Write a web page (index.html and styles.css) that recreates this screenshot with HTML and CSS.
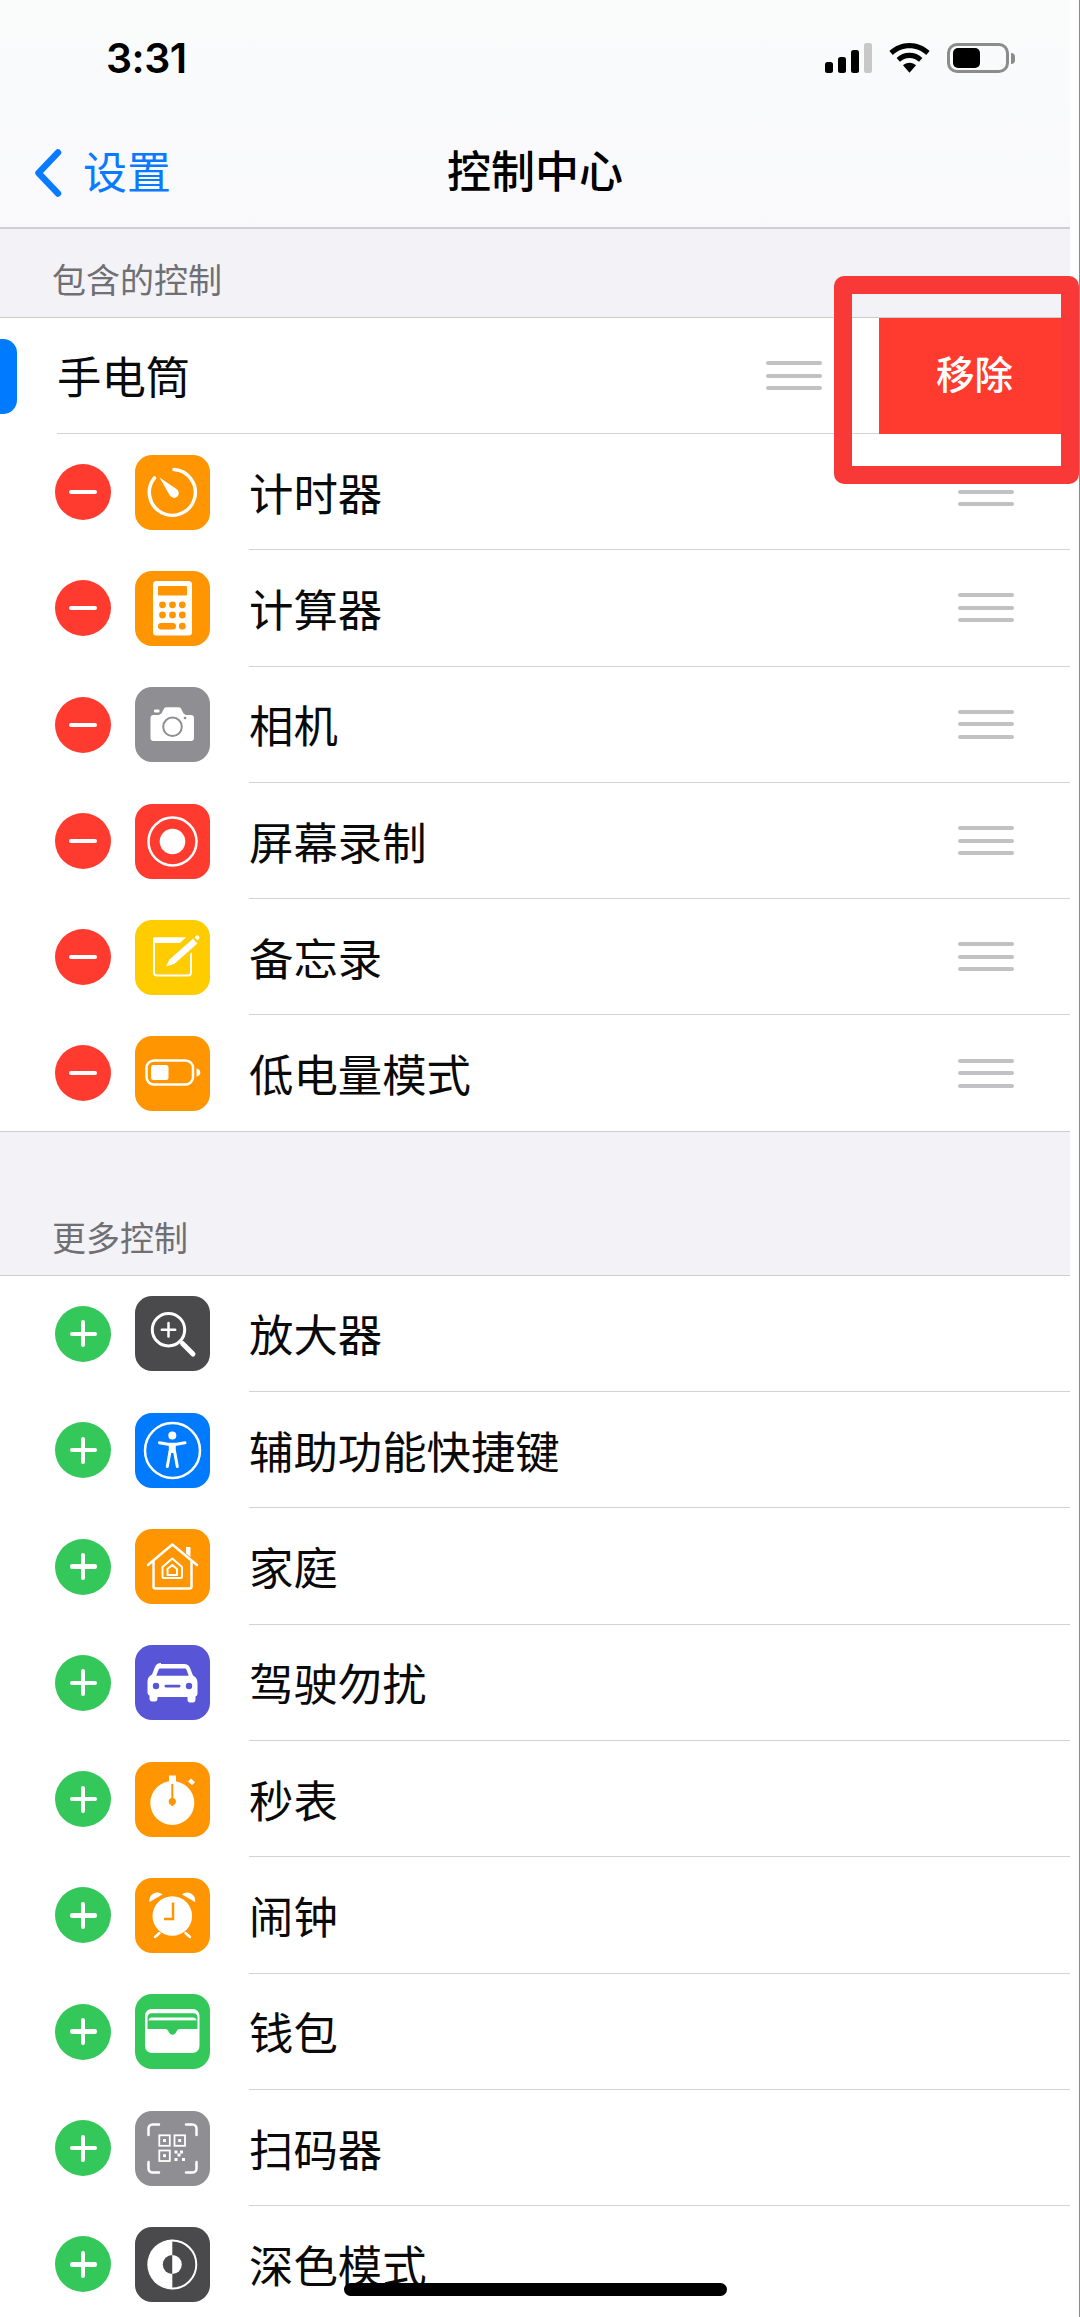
FILE: index.html
```html
<!DOCTYPE html>
<html lang="zh-CN">
<head>
<meta charset="utf-8">
<title>控制中心</title>
<link rel="stylesheet" href="styles.css">
</head>
<body>
<div class="page">
  <header class="top">
    <div class="status">
      <span class="time">3:31</span>
      <div class="status-icons">
        <div class="signal"><i class="b1"></i><i class="b2"></i><i class="b3"></i><i class="b4"></i></div>
        <svg class="wifi" viewBox="0 0 41 30"><path d="M20.5 0C12.6 0 5.6 3 .4 8l3.4 3.9C8.1 7.700 14 5.200 20.500 5.200S32.900 7.700 37.200 11.900L40.600 8C35.400 3 28.400 0 20.500 0Z"/><path d="M20.500 9.800c-5 0-9.500 1.900-12.900 5.100l3.400 3.900c2.500-2.300 5.800-3.700 9.500-3.700s7 1.400 9.500 3.700l3.400-3.900c-3.400-3.200-7.900-5.100-12.900-5.100Z"/><path d="M20.500 19.800c-2.500 0-4.800 1-6.500 2.500l6.500 7.500 6.500-7.500c-1.700-1.500-4-2.500-6.500-2.500Z"/></svg>
        <div class="battery"><div class="battery-body"><div class="battery-fill"></div></div><div class="battery-nub"></div></div>
      </div>
    </div>
    <nav class="nav">
      <div class="back">
        <svg class="chev" viewBox="0 0 28 48"><path d="M24 3.500 4.500 24 24 44.500"/></svg>
        <span class="back-label">设置</span>
      </div>
      <h1 class="title">控制中心</h1>
    </nav>
  </header>

  <div class="section-head first">包含的控制</div>
  <section class="list">
    <div class="row row-active">
      <div class="active-mark"></div>
      <div class="row-body wide">
        <span class="label">手电筒</span>
        <div class="grip shifted"><i></i><i></i><i></i></div>
      </div>
      <div class="remove">移除</div>
    </div>

    <div class="row">
      <div class="ctl minus"><i></i></div>
      <svg class="ic orange" viewBox="0 0 75 75"><path class="ln w35" d="M39 14.400A23 23 0 1 1 19.500 22.800"/><path class="fw" d="M24.500 22.500 41.500 34a4.800 4.800 0 1 1-6.600 6.600Z"/></svg>
      <div class="row-body"><span class="label">计时器</span><div class="grip"><i></i><i></i><i></i></div></div>
    </div>

    <div class="row">
      <div class="ctl minus"><i></i></div>
      <svg class="ic orange" viewBox="0 0 75 75"><rect class="fw" x="18" y="10" width="39" height="54.500" rx="3.500"/><g class="fo"><rect x="23" y="15" width="29" height="9.500" rx="1"/><circle cx="27.500" cy="33.800" r="3.400"/><circle cx="37.500" cy="33.800" r="3.400"/><circle cx="47.300" cy="33.800" r="3.400"/><circle cx="27.500" cy="44" r="3.400"/><circle cx="37.500" cy="44" r="3.400"/><circle cx="47.300" cy="44" r="3.400"/><rect x="23" y="52" width="18" height="6.500" rx="3.200"/><circle cx="47.300" cy="55.200" r="3.400"/></g></svg>
      <div class="row-body"><span class="label">计算器</span><div class="grip"><i></i><i></i><i></i></div></div>
    </div>

    <div class="row">
      <div class="ctl minus"><i></i></div>
      <svg class="ic gray" viewBox="0 0 75 75"><path class="fw" d="M18.500 28h5l3-1.500 2.500-5a2.500 2.500 0 0 1 2-1.300h13a2.500 2.500 0 0 1 2 1.300l2.500 5 2.500 1.500h5a3 3 0 0 1 3 3v20a3 3 0 0 1-3 3h-37.500a3 3 0 0 1-3-3v-20a3 3 0 0 1 3-3Z"/><rect class="fw" x="19" y="22.500" width="5.500" height="3" rx="1"/><circle class="ring-gray" cx="37.500" cy="39.800" r="9.300"/><circle class="fgr" cx="50" cy="31" r="1.300"/></svg>
      <div class="row-body"><span class="label">相机</span><div class="grip"><i></i><i></i><i></i></div></div>
    </div>

    <div class="row">
      <div class="ctl minus"><i></i></div>
      <svg class="ic red" viewBox="0 0 75 75"><circle class="ln w25" cx="37.500" cy="37.500" r="24"/><circle class="fw" cx="37.500" cy="37.500" r="12.800"/></svg>
      <div class="row-body"><span class="label">屏幕录制</span><div class="grip"><i></i><i></i><i></i></div></div>
    </div>

    <div class="row">
      <div class="ctl minus"><i></i></div>
      <svg class="ic yellow" viewBox="0 0 75 75"><rect class="ln w2" x="19" y="18.500" width="37" height="37" rx="3"/><rect class="fw" x="18" y="17.500" width="39" height="5.500"/><path class="gap" d="M32 44 62 18"/><path class="fw" d="M31 46.500 34.500 39.500 58 18.800 62.400 23.600 39.500 43.800Z"/><path class="fw" d="M59.500 17.300 61.500 15.500C62.800 14.400 65.500 17.400 64.200 18.600L62.500 20.500Z"/></svg>
      <div class="row-body"><span class="label">备忘录</span><div class="grip"><i></i><i></i><i></i></div></div>
    </div>

    <div class="row last">
      <div class="ctl minus"><i></i></div>
      <svg class="ic orange" viewBox="0 0 75 75"><rect class="ln w25" x="11.500" y="24.500" width="46.500" height="24" rx="7.500"/><rect class="fw" x="16" y="29" width="17.500" height="15" rx="2.500"/><path class="fw" d="M61.500 32.500c2.500.4 3.800 2 3.800 4s-1.300 3.600-3.800 4Z"/></svg>
      <div class="row-body flush"><span class="label">低电量模式</span><div class="grip"><i></i><i></i><i></i></div></div>
    </div>
  </section>

  <div class="section-head second">更多控制</div>
  <section class="list">
    <div class="row">
      <div class="ctl plus"><i></i></div>
      <svg class="ic dark" viewBox="0 0 75 75"><circle class="ln w3" cx="33.500" cy="33.700" r="16.200"/><path class="ln w25" d="M33.500 27v13.400M26.800 33.700h13.400"/><path class="ln w5" d="M47.500 47.500 58 58"/></svg>
      <div class="row-body"><span class="label">放大器</span></div>
    </div>
    <div class="row">
      <div class="ctl plus"><i></i></div>
      <svg class="ic blue" viewBox="0 0 75 75"><circle class="ln w25" cx="37.500" cy="37.500" r="27.500"/><circle class="fw" cx="37.300" cy="22.500" r="4"/><path class="ln w3" d="M24.500 29.800 33 31.300H41.500L50 29.800"/><path class="fw" d="M33.800 30.500H40.800V40H33.800Z"/><path class="ln w3" d="M35 38.500 32.300 53.500M39.600 38.500 42.300 53.500"/></svg>
      <div class="row-body"><span class="label">辅助功能快捷键</span></div>
    </div>
    <div class="row">
      <div class="ctl plus"><i></i></div>
      <svg class="ic orange" viewBox="0 0 75 75"><path class="ln w25" d="M13 36 37.300 15.500 62 36"/><path class="ln w25" d="M18.500 33v24.500a2 2 0 0 0 2 2h34a2 2 0 0 0 2-2V33"/><path class="fw" d="M51 18h4.500v10L51 24.500Z"/><path class="ln w2" d="M27.500 38 37.300 29.500 47 38v9.500a1.500 1.500 0 0 1-1.500 1.500h-16.500a1.500 1.500 0 0 1-1.500-1.500Z"/><path class="ln w2" d="M32.500 40 37.300 36 42 40v6h-9.500Z"/></svg>
      <div class="row-body"><span class="label">家庭</span></div>
    </div>
    <div class="row">
      <div class="ctl plus"><i></i></div>
      <svg class="ic indigo" viewBox="0 0 75 75"><path class="fw" d="M26 19h23c3 0 5 1.600 6 4l3 7.500c2.800 1.500 4.500 3.800 4.500 7v11c0 1.500-.8 2.500-2 3v3.300c0 1.500-1 2.700-2.500 2.700h-3c-1.500 0-2.500-1.200-2.500-2.700V52h-30v1.800c0 1.500-1 2.700-2.500 2.700h-3c-1.500 0-2.500-1.200-2.500-2.700v-3.300c-1.200-.5-2-1.500-2-3v-11c0-3.200 1.700-5.500 4.500-7l3-7.500c1-2.400 3-4 6-4Z"/><path class="find" d="M25.500 23.500h24c1 0 1.700.5 2 1.300l2.200 5.900H21.300l2.200-5.900c.3-.8 1-1.300 2-1.300Z"/><circle class="find" cx="21" cy="41" r="3.200"/><circle class="find" cx="54" cy="41" r="3.200"/><rect class="find" x="29.500" y="39.800" width="16" height="2.600" rx="1.300"/></svg>
      <div class="row-body"><span class="label">驾驶勿扰</span></div>
    </div>
    <div class="row">
      <div class="ctl plus"><i></i></div>
      <svg class="ic orange" viewBox="0 0 75 75"><circle class="fw" cx="37.300" cy="41" r="22"/><rect class="fw" x="34" y="13.500" width="7" height="8"/><path class="fw" d="M53 19.500 56 16.500 60 20.300 57 23.300Z"/><path class="lno" d="M37.300 22v22"/><circle class="fo" cx="37.300" cy="39.500" r="3.600"/></svg>
      <div class="row-body"><span class="label">秒表</span></div>
    </div>
    <div class="row">
      <div class="ctl plus"><i></i></div>
      <svg class="ic orange" viewBox="0 0 75 75"><circle class="fw" cx="37.300" cy="38" r="19.800"/><path class="fw" d="M14.500 24c-1-4 2-9 7-9.500 2.500-.2 4.500.7 6 2Z"/><path class="fw" d="M60 24c1-4-2-9-7-9.500-2.500-.2-4.500.7-6 2Z"/><path class="ln w25" d="M20 59 24.500 55M55 59 50.500 55"/><path class="lno-t" d="M38 24.500V41H29"/></svg>
      <div class="row-body"><span class="label">闹钟</span></div>
    </div>
    <div class="row">
      <div class="ctl plus"><i></i></div>
      <svg class="ic green" viewBox="0 0 75 75"><path class="fw" d="M17 15h41a6.500 6.500 0 0 1 6.500 6.500V52a7 7 0 0 1-7 7h-40.500a7 7 0 0 1-7-7V21.500A6.500 6.500 0 0 1 17 15Z"/><path class="fg" d="M12.500 23.600c0-2.800 1.500-4.400 4-4.400h42c2.500 0 4 1.600 4 4.400v3h-50Z"/><path class="fw" d="M13.500 26.600c.3-2 1.500-3 3.500-3h41c2 0 3.200 1 3.500 3Z"/><path class="fg" d="M12.500 26.600h50v8.400H45c-2 0-3 1-3.800 3-.7 1.600-2 2.700-3.700 2.700s-3-1.100-3.700-2.700c-.8-2-1.800-3-3.800-3H12.500Z"/></svg>
      <div class="row-body"><span class="label">钱包</span></div>
    </div>
    <div class="row">
      <div class="ctl plus"><i></i></div>
      <svg class="ic gray" viewBox="0 0 75 75"><path class="ln w25" d="M13.500 24v-6.500a4 4 0 0 1 4-4h6.500M51 13.500h6.500a4 4 0 0 1 4 4v6.500M13.500 51v6.500a4 4 0 0 0 4 4h6.500M51 61.500h6.500a4 4 0 0 0 4-4V51"/><g class="qr"><rect x="24.300" y="24.300" width="10.500" height="10.500"/><rect x="39.500" y="24.300" width="10.500" height="10.500"/><rect x="24.300" y="39.500" width="10.500" height="10.500"/></g><g class="fw"><rect x="28" y="28" width="3" height="3"/><rect x="43.200" y="28" width="3" height="3"/><rect x="28" y="43.200" width="3" height="3"/><rect x="39.500" y="39.500" width="3" height="3"/><rect x="45" y="39.500" width="3" height="3"/><rect x="42.500" y="42.500" width="3" height="3"/><rect x="39.500" y="47" width="3" height="3"/><rect x="47" y="47" width="3" height="3"/></g></svg>
      <div class="row-body"><span class="label">扫码器</span></div>
    </div>
    <div class="row">
      <div class="ctl plus"><i></i></div>
      <svg class="ic dark" viewBox="0 0 75 75"><path class="fw" d="M37.300 12.500a25 25 0 0 0 0 50Z"/><path class="ln w2" d="M37.300 13.500a24 24 0 0 1 0 48"/><path class="fd" d="M37.300 28a9.500 9.500 0 0 0 0 19Z"/><path class="fw" d="M37.300 28a9.500 9.500 0 0 1 0 19Z"/></svg>
      <div class="row-body"><span class="label">深色模式</span></div>
    </div>
  </section>
</div>

<div class="edge"></div>
<div class="callout"></div>
<div class="home"></div>
</body>
</html>
```

FILE: styles.css
```css
* { box-sizing: border-box; }
html, body { margin: 0; padding: 0; }
body {
  position: relative;
  width: 1080px;
  height: 2317px;
  overflow: hidden;
  background: #fff;
  font-family: "Noto Sans CJK SC", "Liberation Sans", sans-serif;
  color: #000;
}
.page {
  width: 1070px;
  height: 2317px;
  overflow: hidden;
  background: #f2f2f7;
}

/* header */
.top {
  height: 229px;
  background: linear-gradient(180deg, #fafbfb 0%, #f9f9fb 100%);
  border-bottom: 2px solid #cfcfd3;
}
.status {
  height: 117px;
  display: flex;
  justify-content: space-between;
  align-items: flex-start;
  padding: 43px 55px 0 106px;
}
.time {
  font-family: "Inter", "Liberation Sans", sans-serif;
  font-size: 41px;
  line-height: 30px;
  font-weight: 600;
  letter-spacing: -0.5px;
}
.status-icons {
  display: flex;
  align-items: flex-start;
}
.signal {
  display: flex;
  align-items: flex-end;
  gap: 5px;
  height: 30px;
  width: 47px;
}
.signal i {
  display: block;
  width: 8px;
  background: #000;
  border-radius: 2.5px;
}
.b1 { height: 11px; }
.b2 { height: 16px; }
.b3 { height: 23px; }
.signal .b4 { height: 30px; background: #c8c8c8; }
.wifi { width: 41px; height: 30px; margin-left: 17px; fill: #000; display: block; }
.battery { display: flex; align-items: center; margin-left: 17px; height: 30px; }
.battery-body {
  width: 62px;
  height: 30px;
  border: 3px solid #8c8c8c;
  border-radius: 10px;
  padding: 2px 3px;
}
.battery-fill { width: 27px; height: 20px; background: #000; border-radius: 5px; }
.battery-nub {
  width: 4px;
  height: 11px;
  margin-left: 2px;
  background: #8c8c8c;
  border-radius: 0 6px 6px 0;
}
.nav {
  position: relative;
  height: 110px;
  display: flex;
  align-items: flex-start;
  justify-content: center;
}
.back {
  position: absolute;
  left: 34px;
  top: 29px;
  display: flex;
  align-items: center;
  gap: 21px;
  color: #0a7aff;
  font-size: 44px;
  line-height: 48px;
}
.back-label { margin-bottom: 6px; }
.chev { width: 28px; height: 48px; fill: none; stroke: #0a7aff; stroke-width: 6.500; stroke-linecap: round; stroke-linejoin: round; display: block; }
.title {
  margin: 27px 0 0;
  font-size: 44px;
  line-height: 50px;
  font-weight: 500;
}

/* section captions */
.section-head {
  display: flex;
  align-items: flex-end;
  padding: 0 0 18px 52px;
  color: #6f6f74;
  font-size: 34px;
  line-height: 40px;
}
.first { height: 88px; }
.second { height: 143px; }

/* lists */
.list {
  background: #fff;
  border-top: 1.500px solid #cdcdd1;
}
.row {
  position: relative;
  display: flex;
  align-items: center;
  height: 116.300px;
  padding-left: 55px;
  background: #fff;
}
.row-active { padding-left: 0; height: 116px; }
.last { border-bottom: 1.500px solid #cdcdd1; }
.active-mark {
  width: 17px;
  height: 75px;
  background: #007aff;
  border-radius: 0 14px 14px 0;
}
.row-body {
  flex: 1;
  align-self: stretch;
  margin-left: 39px;
  display: flex;
  align-items: center;
  justify-content: space-between;
  border-bottom: 1.500px solid #d3d3d6;
}
.flush { border-bottom: 0; }
.wide { margin-left: 40px; }
.label { font-size: 44.400px; line-height: 60px; color: #0a0a0a; }
.row-active .label { padding-bottom: 2px; }
.grip {
  display: flex;
  flex-direction: column;
  gap: 8.500px;
  width: 56px;
  margin-right: 56px;
}
.shifted { margin-right: 248px; }
.grip i { display: block; height: 4px; background: #c2c2c4; border-radius: 2px; }
.remove {
  position: absolute;
  right: 0;
  top: 0;
  width: 191px;
  height: 100%;
  display: flex;
  align-items: center;
  justify-content: center;
  padding-bottom: 8px;
  background: #ff3b30;
  color: #fff;
  font-size: 38.500px;
  font-weight: 500;
}

/* add / remove controls */
.ctl {
  flex: none;
  width: 56px;
  height: 56px;
  border-radius: 50%;
  margin-right: 24px;
  position: relative;
  display: flex;
  align-items: center;
  justify-content: center;
}
.minus { background: #ff3b30; }
.plus { background: #34c759; }
.minus i { display: block; width: 28px; height: 4px; border-radius: 2px; background: #fff; }
.plus i { display: block; width: 27px; height: 4.500px; border-radius: 2.250px; background: #fff; }
.plus::after {
  content: "";
  position: absolute;
  left: 25.750px;
  top: 14.500px;
  width: 4.500px;
  height: 27px;
  border-radius: 2.250px;
  background: #fff;
}

/* app icons */
.ic { flex: none; display: block; width: 75px; height: 75px; border-radius: 17px; }
.orange { background: #ff9500; }
.gray { background: #8e8e93; }
.red { background: #ff3b30; }
.yellow { background: #ffcc00; }
.dark { background: #4a4a4c; }
.blue { background: #007aff; }
.indigo { background: #5856d6; }
.green { background: #34c759; }
.fw { fill: #fff; }
.fo { fill: #ff9500; }
.fg { fill: #34c759; }
.fd { fill: #4a4a4c; }
.fgr { fill: #8e8e93; }
.find { fill: #5856d6; }
.ln { fill: none; stroke: #fff; stroke-linecap: round; stroke-linejoin: round; }
.w2 { stroke-width: 2px; }
.w25 { stroke-width: 2.500px; }
.w3 { stroke-width: 3px; }
.w35 { stroke-width: 3.500px; }
.w5 { stroke-width: 5px; }
.ring-gray { fill: none; stroke: #8e8e93; stroke-width: 2px; }
.gap { fill: none; stroke: #ffcc00; stroke-width: 15px; }
.lno { fill: none; stroke: #ff9500; stroke-width: 2px; }
.lno-t { fill: none; stroke: #ff9500; stroke-width: 2.500px; }
.qr rect { fill: none; stroke: #fff; stroke-width: 1.800px; }

/* overlays */
.edge {
  position: absolute;
  right: 0;
  top: 0;
  width: 1px;
  height: 100%;
  background: #8a8a8a;
}
.callout {
  position: absolute;
  left: 834px;
  top: 276px;
  width: 245px;
  height: 208px;
  border: 18px solid #f93838;
  border-radius: 10px;
}
.home {
  position: absolute;
  left: 344px;
  top: 2283px;
  width: 383px;
  height: 13px;
  border-radius: 7px;
  background: #000;
}
```
